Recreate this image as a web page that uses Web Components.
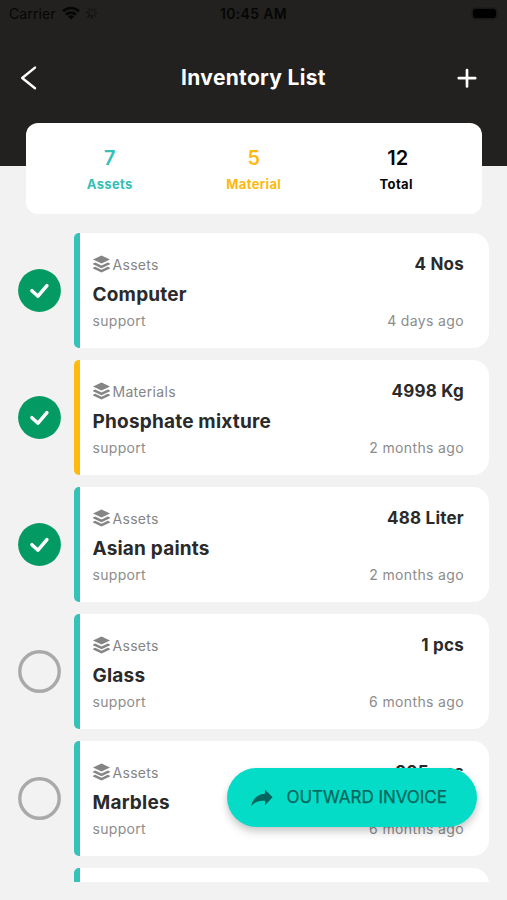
<!DOCTYPE html>
<html lang="en">
<head>
<meta charset="utf-8">
<title>Inventory List</title>
<style>
html,body{margin:0;padding:0}
body{width:507px;height:900px;overflow:hidden;background:#f2f2f2;font-family:Inter,"Liberation Sans",sans-serif}
</style>
</head>
<body>
<inventory-app></inventory-app>
<script>
const define = (name, render) => customElements.define(name, class extends HTMLElement {
  connectedCallback() {
    if (this.shadowRoot) return;
    this.attachShadow({ mode: 'open' }).innerHTML = render(this);
  }
});

define('status-bar', () => `
<style>
:host{display:grid;grid-template-columns:1fr auto 1fr;align-items:center;height:28px;padding:0 9px;color:#060606;font-size:14px;line-height:28px;box-sizing:border-box}
.left{display:flex;align-items:center;gap:6px}
.carrier{letter-spacing:.1px}
.time{font-weight:600;font-size:14px;letter-spacing:.35px}
.battery{justify-self:end;width:23px;height:9px;border-radius:3px;background:#000;margin:0 2px 2px 0;box-shadow:0 0 0 1.5px #1a1918}
svg{display:block}
.left svg{margin-top:-2px}
</style>
<div class="left"><span class="carrier">Carrier</span>
<svg width="18" height="14" viewBox="0 0 18 14" fill="none" stroke="#060606" stroke-width="2.6"><path d="M1 5.2a11.5 11.5 0 0 1 16 0"/><path d="M4 8.6a7.2 7.2 0 0 1 10 0"/><path d="M9 13.6 5.9 10.5a4.4 4.4 0 0 1 6.2 0z" fill="#060606" stroke="none"/></svg>
<svg width="12" height="12" viewBox="0 0 12 12" stroke-width="1.3" stroke-linecap="round"><g stroke="#0d0d0c"><path d="M6 8.4v2.6M3.6 7.8 2 10.2M3 5.8.8 5.4"/></g><g stroke="#171615"><path d="M8.2 7.6l1.4 2M3.8 3.6 2.8 2.2M6 3.2V1M8.4 3.8l1.6-1.5M9 6l2-.3"/></g></svg></div>
<span class="time">10:45 AM</span><span class="battery"></span>`);

define('nav-bar', () => `
<style>
:host{display:grid;grid-template-columns:1fr auto 1fr;align-items:center;height:99px;padding:0 20px;box-sizing:border-box;color:#fff}
.title{font-size:21px;font-weight:650;line-height:28px;letter-spacing:.32px}
svg{display:block}.plus{justify-self:end;margin-right:10px}
</style>
<svg width="18" height="26" viewBox="0 0 18 26" fill="none" stroke="#fff" stroke-width="2.4" stroke-linecap="round" stroke-linejoin="round"><path d="M15 2.6 2.2 13 15 23.2"/></svg>
<span class="title"><slot></slot></span>
<svg class="plus" width="20" height="20" viewBox="0 0 20 20" fill="none" stroke="#fff" stroke-width="2.7" stroke-linecap="round"><path d="M10 2v16.4M1.8 10.2h16.4"/></svg>`);

define('stat-item', el => `
<style>
:host{display:flex;flex-direction:column;align-items:center;width:144px;color:${el.getAttribute('color')}}
b{font-size:20px;line-height:26px;font-weight:600}
span{font-size:13px;line-height:18px;margin-top:4px;font-weight:700;letter-spacing:.35px}
:host([total]) span{margin-right:3px}
</style><b>${el.getAttribute('value')}</b><span><slot></slot></span>`);

define('summary-card', () => `
<style>:host{display:flex;justify-content:center;box-sizing:border-box;margin:-43px 25.5px 0 26px;height:91px;padding-top:22px;border-radius:12px;background:#fff}</style><slot></slot>`);

define('check-mark', el => el.hasAttribute('checked') ? `
<style>:host,svg{display:block}</style>
<svg width="43" height="43" viewBox="0 0 43 43"><circle cx="21.5" cy="21.5" r="21.4" fill="#049a63"/><path d="M13.9 21.7 20 27.2 28.9 16.7" fill="none" stroke="#fff" stroke-width="3.5" stroke-linecap="round" stroke-linejoin="round"/></svg>` : `
<style>:host,svg{display:block}</style>
<svg width="43" height="43" viewBox="0 0 43 43"><circle cx="21.5" cy="21.5" r="19.7" fill="none" stroke="#a9a9a9" stroke-width="3.4"/></svg>`);

define('inventory-row', el => {
  const a = n => el.getAttribute(n);
  const style = `
<style>
:host{display:flex;align-items:center;gap:13px;height:115px;flex:none}
.card{flex:1;height:115px;box-sizing:border-box;display:flex;justify-content:space-between;padding:21px 24.5px 0 12.5px;background:#fff;border-left:6px solid ${a('kind') === 'Materials' ? '#ffb90f' : '#35c2b8'};border-radius:5px 16px 16px 5px}
.main,.side{display:flex;flex-direction:column}
.side{align-items:flex-end;justify-content:space-between;height:77px}
.kind{display:flex;align-items:center;gap:3px;height:20px;font-size:14px;color:#858585;letter-spacing:.3px}
.name{font-size:19px;line-height:26px;font-weight:650;color:#2a2a2a;margin-top:8px;letter-spacing:.2px}
.by,.when{font-size:14px;line-height:20px;color:#8c8c8c;letter-spacing:.3px}
.when{letter-spacing:.36px}
.by{margin-top:3px}
.qty{font-size:17px;line-height:20px;font-weight:650;color:#2a2a2a;letter-spacing:.22px}
svg{display:block}
</style>`;
  return `${style}
<check-mark ${el.hasAttribute('checked') ? 'checked' : ''}></check-mark>
<div class="card">${el.hasAttribute('placeholder') ? '' : `
<div class="main"><span class="kind"><svg width="17" height="18" viewBox="0 0 17 18" fill="#858585"><path d="M8.5.4 17 4.5 8.5 8.6 0 4.5z"/><path d="M0 8.5 2.2 7.4 8.5 10.5 14.8 7.4 17 8.5v.7L8.5 13.3 0 9.2z"/><path d="M0 12.8 2.2 11.8 8.5 14.8 14.8 11.8 17 12.8v.7L8.5 17.6 0 13.5z"/></svg><span>${a('kind')}</span></span>
<span class="name"><slot></slot></span><span class="by">support</span></div>
<div class="side"><span class="qty">${a('qty')}</span><span class="when">${a('when')}</span></div>`}
</div>`;
});

define('inventory-list', () => `
<style>:host{display:flex;flex-direction:column;gap:12px;box-sizing:border-box;height:649px;margin-top:19px;padding:0 18.5px 0 18px;overflow:hidden}</style><slot></slot>`);

define('action-button', () => `
<style>
:host{position:absolute;left:227px;top:768px;width:249.5px;height:58.5px;box-sizing:border-box;padding:0 0 1px 24px;border-radius:30px;background:#05dcc7;color:#04665d;display:flex;align-items:center;gap:13.5px;box-shadow:0 6px 9px rgba(0,0,0,.14),0 2px 6px rgba(0,0,0,.1)}
span{font-size:17px;line-height:24px;letter-spacing:-.03px;-webkit-text-stroke:.25px #04665d}
svg{display:block;margin-top:2px}
</style>
<svg width="22" height="18" viewBox="0 0 22 18" fill="#04665d"><path d="M14 .4 21.6 8.2 14 16.2v-4.4C8 11.2 3.6 13 0 17.6 1.5 10.4 6 5.4 14 4.8z"/></svg>
<span><slot></slot></span>`);

define('inventory-app', () => `
<style>
:host{display:block;position:relative;width:507px;height:900px;background:#f2f2f2;overflow:hidden}
header{height:166px;background:#22211f}
</style>
<header><status-bar></status-bar><nav-bar>Inventory List</nav-bar></header>
<summary-card>
<stat-item value="7" color="#35bfb6">Assets</stat-item>
<stat-item value="5" color="#fdb913">Material</stat-item>
<stat-item total value="12" color="#080808">Total</stat-item>
</summary-card>
<inventory-list>
<inventory-row checked kind="Assets" qty="4 Nos" when="4 days ago">Computer</inventory-row>
<inventory-row checked kind="Materials" qty="4998 Kg" when="2 months ago">Phosphate mixture</inventory-row>
<inventory-row checked kind="Assets" qty="488 Liter" when="2 months ago">Asian paints</inventory-row>
<inventory-row kind="Assets" qty="1 pcs" when="6 months ago">Glass</inventory-row>
<inventory-row kind="Assets" qty="995 pcs" when="6 months ago">Marbles</inventory-row>
<inventory-row kind="Assets" placeholder></inventory-row>
</inventory-list>
<action-button>OUTWARD INVOICE</action-button>`);
</script>
</body>
</html>
